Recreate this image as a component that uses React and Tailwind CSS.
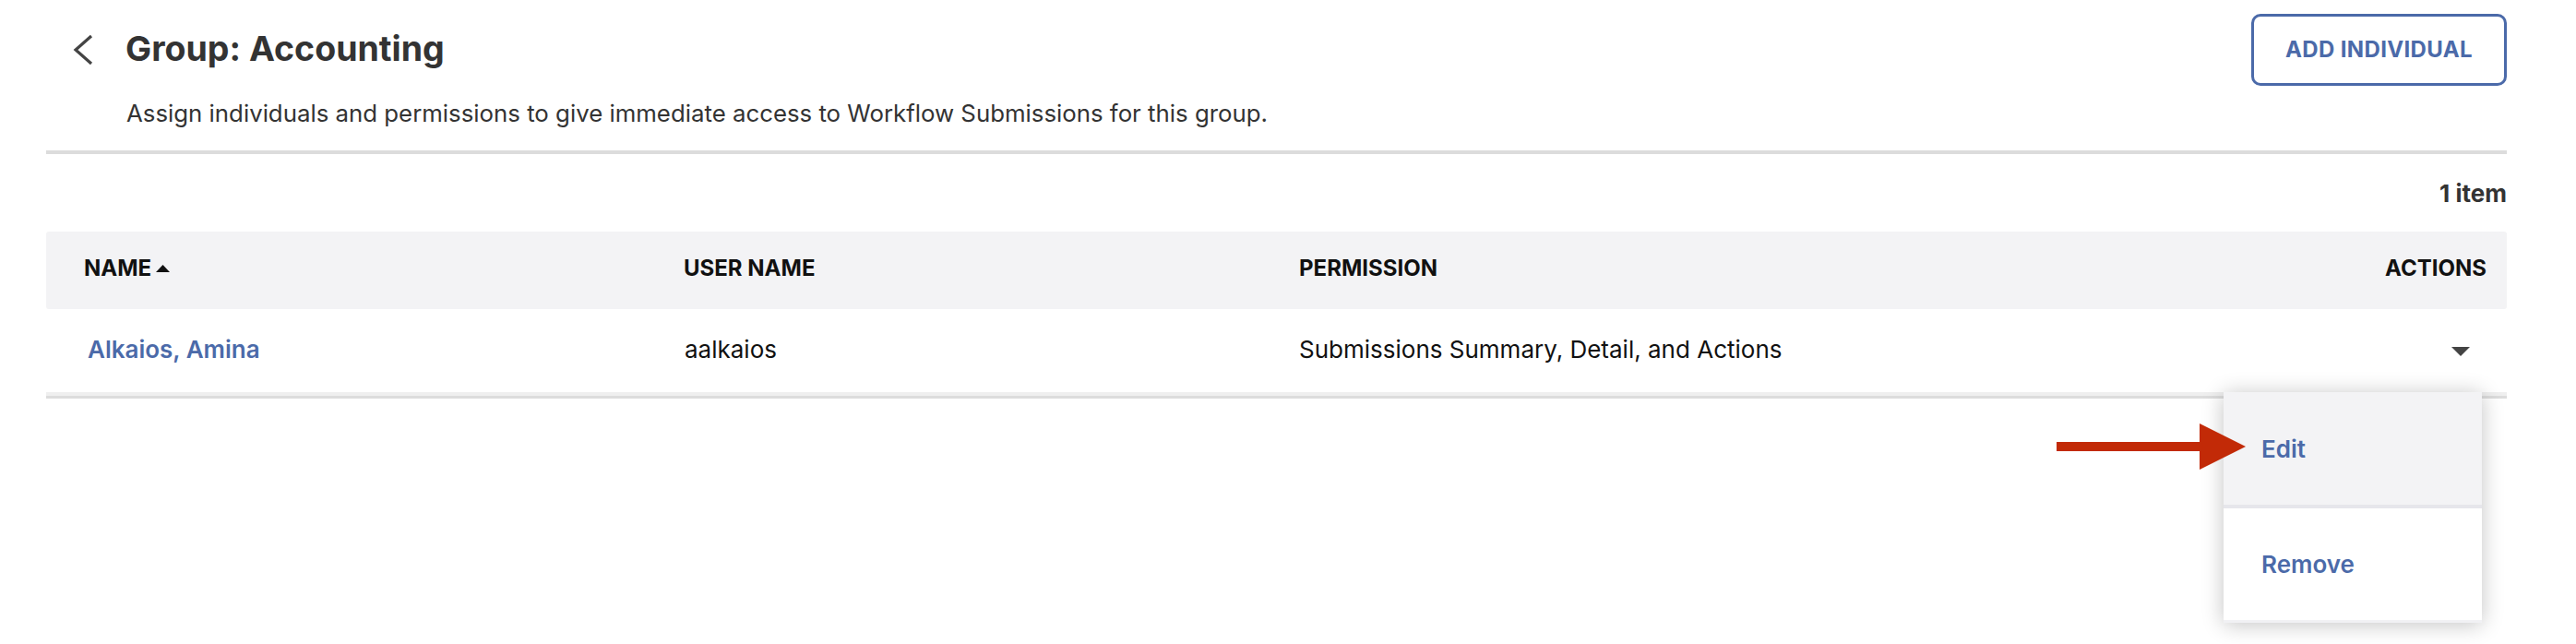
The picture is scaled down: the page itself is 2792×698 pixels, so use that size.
import React from "react";

const blue = "text-[#4b6aa9]";

function Chevron() {
  return (
    <svg width="24" height="34" viewBox="0 0 24 34" fill="none">
      <path d="M21 2 L4 17 L21 32" stroke="#444" strokeWidth="3.2" />
    </svg>
  );
}

function ArrowCallout() {
  return (
    <svg width="205" height="50" viewBox="0 0 205 50">
      <rect x="0" y="20" width="157" height="10" fill="#c22a07" />
      <polygon points="155,0 205,25 155,50" fill="#c22a07" />
    </svg>
  );
}

function ActionsMenu() {
  return (
    <div className="absolute right-[27px] top-[90px] z-10 w-[280px] bg-white shadow-[0_2px_22px_rgba(0,0,0,0.24)]">
      <div className="absolute left-[-181px] top-[34px]">
        <ArrowCallout />
      </div>
      <div className="flex h-[122px] items-center bg-[#f3f3f5] pl-[41px]">
        <span className={`text-[26px] font-semibold ${blue}`}>Edit</span>
      </div>
      <div className="h-[4px] bg-[#e6e6eb]" />
      <div className="flex h-[121px] items-center pl-[41px]">
        <span className={`text-[26px] font-semibold ${blue}`}>Remove</span>
      </div>
      <div className="h-[3px] bg-[#f1f1f4]" />
    </div>
  );
}

export default function App() {
  return (
    <div className="min-h-screen bg-white font-['Inter',sans-serif] text-[#111]">
      <div className="pl-[50px] pr-[75px] pt-[15px]">
        <div className="flex items-start justify-between">
          <div className="flex items-start">
            <button className="ml-[28px] mt-[22px]">
              <Chevron />
            </button>
            <h1 className="ml-[34px] mt-[16px] text-[37.5px] font-bold leading-[44px] text-[#333]">
              Group: Accounting
            </h1>
          </div>
          <button
            className={`h-[78px] w-[277px] rounded-[10px] border-[3px] border-[#4b6aa9] text-[24px] font-bold tracking-[0.35px] ${blue}`}
          >
            ADD INDIVIDUAL
          </button>
        </div>

        <p className="mt-[14px] pl-[87px] text-[25.8px] leading-[32px] text-[#333]">
          Assign individuals and permissions to give immediate access to Workflow Submissions for this group.
        </p>

        <div className="mt-[24px] h-[4px] bg-[#dcdcdc]" />

        <div className="mt-[27px] text-right text-[26px] font-bold leading-[32px] text-[#333]">1 item</div>

        <div className="mt-[25px]">
          <div className="grid h-[84px] grid-cols-[650px_667px_1fr_200px] items-center rounded-[3px] bg-[#f3f3f5] pb-[4px] text-[24px] font-bold text-[#111]">
            <div className="flex items-center gap-[5px] pl-[41px]">
              NAME
              <svg width="15" height="8" viewBox="0 0 15 8">
                <polygon points="0,8 7.5,0 15,8" fill="#111" />
              </svg>
            </div>
            <div className="pl-[41px]">USER NAME</div>
            <div className="pl-[41px]">PERMISSION</div>
            <div className="pr-[22px] text-right">ACTIONS</div>
          </div>

          <div className="relative">
            <div className="grid h-[90px] grid-cols-[650px_667px_1fr_200px] items-center pb-[4px] text-[26px]">
              <div className="pl-[45px]">
                <a className={`font-semibold ${blue}`}>Alkaios, Amina</a>
              </div>
              <div className="pl-[42px]">aalkaios</div>
              <div className="pl-[41px]">Submissions Summary, Detail, and Actions</div>
              <div className="flex justify-end pr-[40px] pt-[6px]">
                <svg width="20" height="10" viewBox="0 0 20 10">
                  <polygon points="0,0 20,0 10,10" fill="#444" />
                </svg>
              </div>
            </div>
            <div className="h-[4px] bg-[#efefef]" />
            <div className="h-[3px] bg-[#dcdcdc]" />
            <ActionsMenu />
          </div>
        </div>
      </div>
    </div>
  );
}
